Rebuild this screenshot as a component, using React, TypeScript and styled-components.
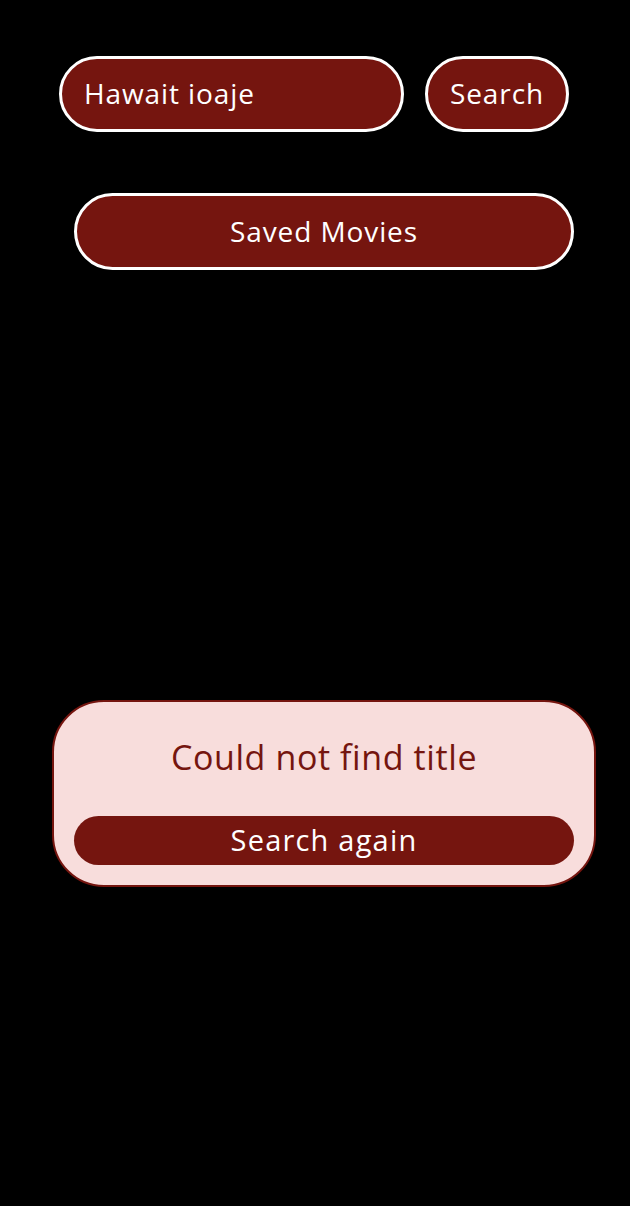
import React from "react";
import styled, { createGlobalStyle } from "styled-components";

const Global = createGlobalStyle`
  html, body { margin: 0; padding: 0; background: #000; }
  body { font-family: "Open Sans", "DejaVu Sans", sans-serif; }
  #root { min-height: 1206px; background: #000; }
`;

const RED = "#75150f";

const Page = styled.div`
  display: flex;
  flex-direction: column;
  padding-top: 56px;
`;

const SearchRow = styled.form`
  display: flex;
  gap: 21px;
  margin-left: 59px;
`;

const Input = styled.input`
  box-sizing: border-box;
  flex: none;
  width: 345px;
  height: 76px;
  border: 3px solid #fff;
  border-radius: 38px;
  background: ${RED};
  color: #fff;
  font-family: inherit;
  font-size: 28px;
  letter-spacing: 0.9px;
  padding: 0 0 2px 22px;
  outline: none;
`;

const PillButton = styled.button<{ $w: number; $h?: number; $ml?: number }>`
  box-sizing: border-box;
  flex: none;
  width: ${(p) => p.$w}px;
  margin-left: ${(p) => p.$ml ?? 0}px;
  height: ${(p) => p.$h ?? 76}px;
  border: 3px solid #fff;
  border-radius: 39px;
  background: ${RED};
  color: #fff;
  font-family: inherit;
  font-size: 28px;
  letter-spacing: 0.9px;
  padding: 0 0 2px;
  cursor: pointer;
`;

const SavedWrap = styled.div`
  margin-top: 61px;
  display: flex;
`;

const Card = styled.div`
  box-sizing: border-box;
  margin: 430px 0 0 52px;
  width: 544px;
  height: 187px;
  background: #f8dddc;
  border: 2px solid ${RED};
  border-radius: 52px;
  padding: 33px 20px 20px;
  display: flex;
  flex-direction: column;
  align-items: center;
`;

const Title = styled.h2`
  margin: 0;
  font-weight: 400;
  font-size: 34px;
  letter-spacing: 0.6px;
  line-height: 44px;
  color: ${RED};
`;

const AgainButton = styled.button`
  margin-top: auto;
  width: 100%;
  height: 49px;
  border: none;
  border-radius: 25px;
  background: ${RED};
  color: #fff;
  font-family: inherit;
  font-size: 29px;
  letter-spacing: 1.2px;
  padding: 0 0 3px;
  cursor: pointer;
`;

export default function App() {
  return (
    <>
      <Global />
      <Page>
        <SearchRow onSubmit={(e) => e.preventDefault()}>
          <Input defaultValue="Hawait ioaje" />
          <PillButton $w={144} type="submit">Search</PillButton>
        </SearchRow>
        <SavedWrap>
          <PillButton $w={500} $h={77} $ml={74}>Saved Movies</PillButton>
        </SavedWrap>
        <Card>
          <Title>Could not find title</Title>
          <AgainButton>Search again</AgainButton>
        </Card>
      </Page>
    </>
  );
}
